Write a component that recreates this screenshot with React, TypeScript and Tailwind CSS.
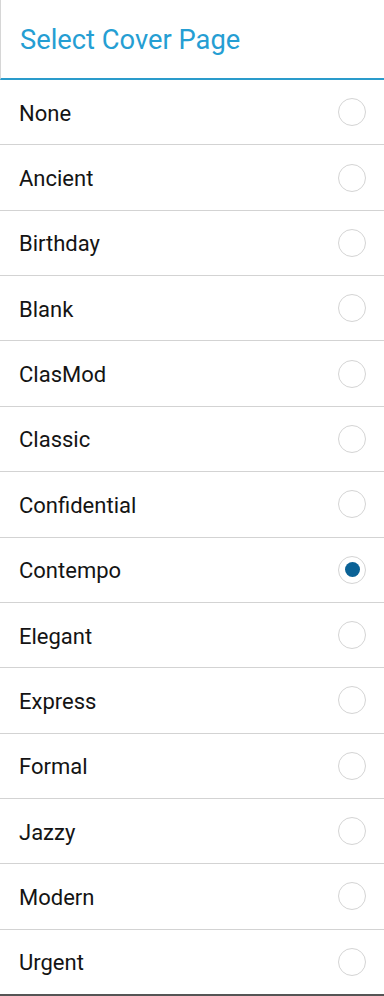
const options = [
  "None",
  "Ancient",
  "Birthday",
  "Blank",
  "ClasMod",
  "Classic",
  "Confidential",
  "Contempo",
  "Elegant",
  "Express",
  "Formal",
  "Jazzy",
  "Modern",
  "Urgent",
];

const selected = "Contempo";

function Radio({ checked }: { checked: boolean }) {
  return (
    <div className="w-[28px] h-[28px] rounded-full border border-[#d4d4d4] bg-white flex items-center justify-center">
      {checked && <div className="w-[15px] h-[15px] rounded-full bg-[#0b6296]" />}
    </div>
  );
}

export default function App() {
  return (
    <div
      className="w-[384px] h-[996px] bg-white flex flex-col overflow-hidden"
      style={{ fontFamily: "Roboto, 'Liberation Sans', sans-serif" }}
    >
      {/* Header */}
      <div className="h-[80px] shrink-0 border-l border-[#d6d6d6] border-b-2 border-b-[#2a9bcb] flex items-center pl-[19px] pt-[3px]">
        <h1 className="text-[27.3px] text-[#259ed3] leading-none">Select Cover Page</h1>
      </div>

      {/* Options */}
      <div className="flex-1 flex flex-col border-b-2 border-b-[#555555]">
        {options.map((opt, idx) => (
          <div
            key={opt}
            className={
              idx === options.length - 1
                ? "flex-1 flex items-center justify-between pl-[19px] pr-[18px]"
                : "flex-1 flex items-center justify-between pl-[19px] pr-[18px] border-b border-[#d3d3d3]"
            }
          >
            <span className="text-[22px] text-[#141414] pt-[2px]">{opt}</span>
            <Radio checked={opt === selected} />
          </div>
        ))}
      </div>
    </div>
  );
}
